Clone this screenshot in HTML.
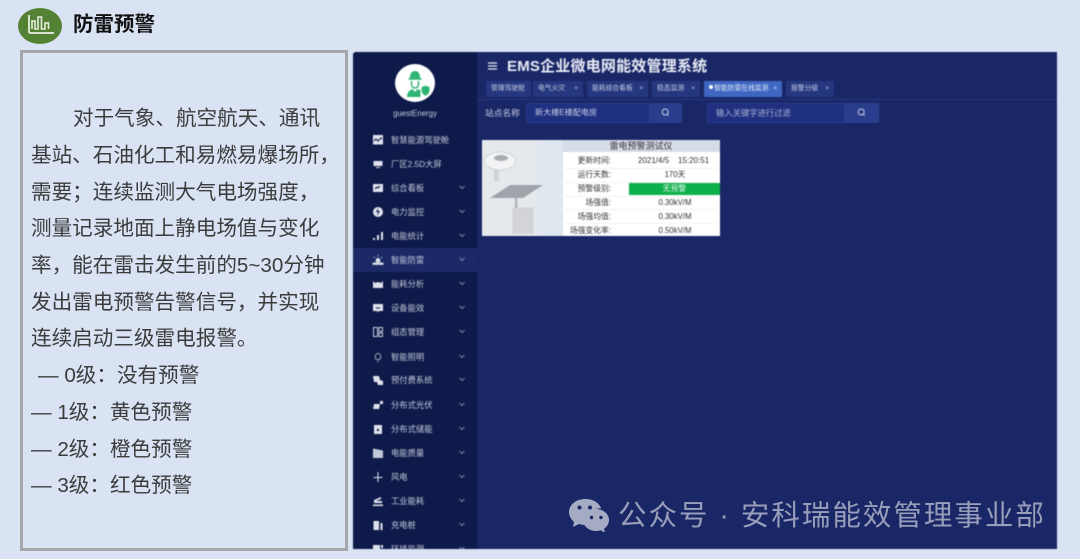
<!DOCTYPE html>
<html lang="zh-CN"><head><meta charset="utf-8"><style>
*{box-sizing:border-box;margin:0;padding:0}
html,body{width:1080px;height:559px;overflow:hidden;background:#d9e3f4;font-family:"Liberation Sans","Noto Sans CJK SC",sans-serif}
.a{position:absolute;white-space:nowrap}
#left div{position:absolute;left:31px;font-size:20.6px;line-height:37px;color:#3c3c3c;white-space:nowrap}
#app{position:absolute;left:353px;top:52px;width:704px;height:497px;background:#1a2766;overflow:hidden;border-radius:3px 0 0 0;filter:blur(.5px)}
#side{position:absolute;left:0;top:0;width:124px;height:497px;background:#0e1a4a}
.m{position:absolute;left:0;width:124px;height:24px;font-size:8.3px;line-height:24px;color:#c4c9da;padding-left:38px}
.m svg.i{position:absolute;left:19px;top:6px}
.m svg.c{position:absolute;left:105px;top:7px}
.t{position:absolute;top:29px;height:16px;background:#25387f;color:#c4cbe2;font-size:6.8px;line-height:16px;padding-left:5px;white-space:nowrap;border-radius:1px}
.t b{position:absolute;right:5px;top:0;font-weight:400;font-size:6.5px}
.row{position:absolute;left:0;width:129px;font-size:7.8px;line-height:11px;color:#333;text-align:right;white-space:nowrap}
.val{position:absolute;left:147px;width:92px;text-align:center;font-size:7.8px;line-height:11px;color:#333;white-space:nowrap}
.ln{position:absolute;left:84px;width:150px;border-top:1px dotted #e3e5e9}
</style></head><body>
<svg class="a" style="left:18px;top:8px" width="44" height="36" viewBox="0 0 44 36"><ellipse cx="22" cy="18" rx="22" ry="18" fill="#548235"/><path d="M11 7V23.500Q11 25 12.500 25H36" fill="none" stroke="#e8eedf" stroke-width="1.800"/><path d="M14 21V13h3v8h3V9h3.500v12h3.500V15h3.500v6" fill="none" stroke="#e8eedf" stroke-width="1.600"/></svg>
<div class="a" style="left:73px;top:10px;font-size:20.500px;line-height:30px;font-weight:700;color:#111">防雷预警</div>
<div class="a" style="left:20px;top:50px;width:328px;height:501px;border:3px solid #a6a6a6"></div>
<div id="left">
<div style="top:100px;left:73px">对于气象、航空航天、通讯</div>
<div style="top:137px">基站、石油化工和易燃易爆场所，</div>
<div style="top:174px">需要；连续监测大气电场强度，</div>
<div style="top:210px">测量记录地面上静电场值与变化</div>
<div style="top:247px">率，能在雷击发生前的5~30分钟</div>
<div style="top:284px">发出雷电预警告警信号，并实现</div>
<div style="top:320px">连续启动三级雷电报警。</div>
<div style="top:357px;left:38px">— 0级：没有预警</div>
<div style="top:394px">— 1级：黄色预警</div>
<div style="top:431px">— 2级：橙色预警</div>
<div style="top:467px">— 3级：红色预警</div>
</div>
<div id="app">
<div id="side">
<svg class="a" style="left:41px;top:11px" width="41" height="39" viewBox="0 0 41 39"><ellipse cx="21" cy="20" rx="20" ry="19" fill="#fff"/><path d="M16 15c0-5 2-7 5-7s5 2 5 7h1.500v1.800h-13V15z" fill="#2fb573"/><path d="M17.500 18v3c0 2.500 1.500 4 3.500 4s3.500-1.500 3.500-4v-3" fill="none" stroke="#2fb573" stroke-width="1.500"/><path d="M13 34c0-5 3-7 5.500-8l2.500 3 2.500-3 3 1.200V34z" fill="#2fb573"/><path d="M31.500 22l4.500 1.800v3.500c0 3-2 5-4.500 6-2.500-1-4.500-3-4.500-6v-3.500z" fill="#2fb573" stroke="#fff"/></svg>
<div class="a" style="left:0;width:124px;top:56px;text-align:center;font-size:7.800px;line-height:12px;color:#c4c9da">guestEnergy</div>
<div class="m" style="top:76px"><svg class="i" width="12" height="12" viewBox="0 0 12 12"><path d="M1 1h10v9.500H1z" fill="#dfe2ec"/><path d="M2 7l2-2 2 2 3-3 1 1" stroke="#0e1a4a" fill="none"/></svg>智慧能源驾驶舱</div>
<div class="m" style="top:100px"><svg class="i" width="12" height="12" viewBox="0 0 12 12"><path d="M1.500 3h9v5h-9zM4 9h4v1H4z" fill="#dfe2ec"/></svg>厂区2.5D大屏</div>
<div class="m" style="top:124px"><svg class="i" width="12" height="12" viewBox="0 0 12 12"><path d="M1 2h10v8H1z" fill="#dfe2ec"/><path d="M3 7l2-2 1 1 2-2" stroke="#0e1a4a" fill="none"/></svg>综合看板<svg class="c" width="8" height="8" viewBox="0 0 8 8"><path d="M1.500 3L4 5.500 6.500 3" stroke="#7a84a8" fill="none"/></svg></div>
<div class="m" style="top:148px"><svg class="i" width="12" height="12" viewBox="0 0 12 12"><circle cx="6" cy="6" r="5" fill="#dfe2ec"/><path d="M6 2L4 6h2l-1 4 3-5H6z" fill="#0e1a4a"/></svg>电力监控<svg class="c" width="8" height="8" viewBox="0 0 8 8"><path d="M1.500 3L4 5.500 6.500 3" stroke="#7a84a8" fill="none"/></svg></div>
<div class="m" style="top:172px"><svg class="i" width="12" height="12" viewBox="0 0 12 12"><path d="M1 8h2v2H1zM5 5h2v5H5zM9 2h2v8H9z" fill="#dfe2ec"/></svg>电能统计<svg class="c" width="8" height="8" viewBox="0 0 8 8"><path d="M1.500 3L4 5.500 6.500 3" stroke="#7a84a8" fill="none"/></svg></div>
<div class="m" style="top:196px;background:#1b2a66"><svg class="i" width="12" height="12" viewBox="0 0 12 12"><path d="M4 8c0-5 4-5 4 0zM1 9h10v1.500H1zM6 1v1.500M2 3l1 1M10 3L9 4" stroke="#dfe2ec" stroke-width=".8" fill="#dfe2ec"/></svg>智能防雷<svg class="c" width="8" height="8" viewBox="0 0 8 8"><path d="M1.500 3L4 5.500 6.500 3" stroke="#7a84a8" fill="none"/></svg></div>
<div class="m" style="top:220px"><svg class="i" width="12" height="12" viewBox="0 0 12 12"><path d="M1 3l2 2 3-1 3 1 2-2v7H1z" fill="#dfe2ec"/></svg>能耗分析<svg class="c" width="8" height="8" viewBox="0 0 8 8"><path d="M1.500 3L4 5.500 6.500 3" stroke="#7a84a8" fill="none"/></svg></div>
<div class="m" style="top:244px"><svg class="i" width="12" height="12" viewBox="0 0 12 12"><path d="M1 2h10v7H7l-1 1.500L5 9H1z" fill="#dfe2ec"/><path d="M4 6h4" stroke="#0e1a4a"/></svg>设备能效<svg class="c" width="8" height="8" viewBox="0 0 8 8"><path d="M1.500 3L4 5.500 6.500 3" stroke="#7a84a8" fill="none"/></svg></div>
<div class="m" style="top:268px"><svg class="i" width="12" height="12" viewBox="0 0 12 12"><path d="M1.500 1.500h4v9h-4zM7 1.500h3.500v4H7zM7 7h3.500v3.500H7z" stroke="#c4c9da" fill="none"/></svg>组态管理<svg class="c" width="8" height="8" viewBox="0 0 8 8"><path d="M1.500 3L4 5.500 6.500 3" stroke="#7a84a8" fill="none"/></svg></div>
<div class="m" style="top:293px"><svg class="i" width="12" height="12" viewBox="0 0 12 12"><path d="M4.500 8.500C2 6 3.500 2.500 6 2.500S10 6 7.500 8.500zM5 10.500h2" stroke="#c4c9da" stroke-width=".8" fill="none"/></svg>智能照明<svg class="c" width="8" height="8" viewBox="0 0 8 8"><path d="M1.500 3L4 5.500 6.500 3" stroke="#7a84a8" fill="none"/></svg></div>
<div class="m" style="top:316px"><svg class="i" width="12" height="12" viewBox="0 0 12 12"><path d="M1 2h6l1 4 3 1v4H6L5 8H2z" fill="#dfe2ec"/></svg>预付费系统<svg class="c" width="8" height="8" viewBox="0 0 8 8"><path d="M1.500 3L4 5.500 6.500 3" stroke="#7a84a8" fill="none"/></svg></div>
<div class="m" style="top:341px"><svg class="i" width="12" height="12" viewBox="0 0 12 12"><path d="M2 5h6l-1 5H1zM8 2h3v3H8z" fill="#dfe2ec"/></svg>分布式光伏<svg class="c" width="8" height="8" viewBox="0 0 8 8"><path d="M1.500 3L4 5.500 6.500 3" stroke="#7a84a8" fill="none"/></svg></div>
<div class="m" style="top:365px"><svg class="i" width="12" height="12" viewBox="0 0 12 12"><path d="M2 2h8v9H2z" fill="#dfe2ec"/><path d="M5 6h2v2H5z" fill="#0e1a4a"/></svg>分布式储能<svg class="c" width="8" height="8" viewBox="0 0 8 8"><path d="M1.500 3L4 5.500 6.500 3" stroke="#7a84a8" fill="none"/></svg></div>
<div class="m" style="top:389px"><svg class="i" width="12" height="12" viewBox="0 0 12 12"><path d="M1 1.500l10 2V11H1z" fill="#c4c9da"/></svg>电能质量<svg class="c" width="8" height="8" viewBox="0 0 8 8"><path d="M1.500 3L4 5.500 6.500 3" stroke="#7a84a8" fill="none"/></svg></div>
<div class="m" style="top:413px"><svg class="i" width="12" height="12" viewBox="0 0 12 12"><path d="M6 1v10M1.500 6.500h9" stroke="#dfe2ec"/></svg>风电<svg class="c" width="8" height="8" viewBox="0 0 8 8"><path d="M1.500 3L4 5.500 6.500 3" stroke="#7a84a8" fill="none"/></svg></div>
<div class="m" style="top:437px"><svg class="i" width="12" height="12" viewBox="0 0 12 12"><path d="M2 5l7-3v2L4 6h6v2H2zM1 9.500h10V11H1z" fill="#dfe2ec"/></svg>工业能耗<svg class="c" width="8" height="8" viewBox="0 0 8 8"><path d="M1.500 3L4 5.500 6.500 3" stroke="#7a84a8" fill="none"/></svg></div>
<div class="m" style="top:461px"><svg class="i" width="12" height="12" viewBox="0 0 12 12"><path d="M1.500 2H7v9H1.500zM8.500 4h2v7h-2z" fill="#dfe2ec"/></svg>充电桩<svg class="c" width="8" height="8" viewBox="0 0 8 8"><path d="M1.500 3L4 5.500 6.500 3" stroke="#7a84a8" fill="none"/></svg></div>
<div class="m" style="top:485px"><svg class="i" width="12" height="12" viewBox="0 0 12 12"><path d="M1 2h7v10H1zM9 2h2v3H9z" fill="#dfe2ec"/></svg>环境监测<svg class="c" width="8" height="8" viewBox="0 0 8 8"><path d="M1.500 3L4 5.500 6.500 3" stroke="#7a84a8" fill="none"/></svg></div>
</div>
<svg class="a" style="left:134px;top:9px" width="11" height="10" viewBox="0 0 11 10"><path d="M1 2h9M1 5h9M1 8h9" stroke="#e8ebf5" stroke-width="1.300"/></svg>
<div class="a" style="left:154px;top:5px;font-size:15px;line-height:20px;font-weight:700;color:#e8ebf5;letter-spacing:.2px">EMS企业微电网能效管理系统</div>
<div class="a" style="left:124px;top:47px;width:580px;height:1px;background:#25387f"></div>
<div class="t" style="left:133px;width:45px">管理驾驶舱</div>
<div class="t" style="left:180px;width:50px">电气火灾<b>×</b></div>
<div class="t" style="left:234px;width:61px">能耗综合看板<b>×</b></div>
<div class="t" style="left:299px;width:48px">稳态监测<b>×</b></div>
<div class="t" style="left:351px;width:78px;background:#3f67c2;color:#e6ebf8"><span style="display:inline-block;width:4px;height:4px;border-radius:50%;background:#fff;margin-right:1px;vertical-align:1px"></span>智能防雷在线监测<b>×</b></div>
<div class="t" style="left:433px;width:48px">报警分级<b>×</b></div>
<div class="a" style="left:132px;top:55px;font-size:8.700px;line-height:12px;color:#c4cbe2">站点名称</div>
<div class="a" style="left:173px;top:51px;width:156px;height:20px;background:#1f3080;border:1px solid #2a3d8c;border-radius:2px;font-size:8.100px;line-height:18px;color:#c9cfe6;padding-left:8px">新大楼E楼配电房</div>
<div class="a" style="left:296px;top:51px;width:33px;height:20px;background:#2a3d8c;border-radius:0 2px 2px 0"></div>
<svg class="a" style="left:308px;top:56px" width="9" height="9" viewBox="0 0 9 9"><circle cx="4.200" cy="4" r="3" stroke="#c9cfe6" fill="none"/><path d="M6.500 6.500l1.200 1" stroke="#c9cfe6"/></svg>
<div class="a" style="left:354px;top:51px;width:172px;height:20px;background:#1f3080;border:1px solid #2a3d8c;border-radius:2px;font-size:8.300px;line-height:18px;color:#a9b2d2;padding-left:8px">输入关键字进行过滤</div>
<div class="a" style="left:491px;top:51px;width:35px;height:20px;background:#2a3d8c;border-radius:0 2px 2px 0"></div>
<svg class="a" style="left:504px;top:56px" width="9" height="9" viewBox="0 0 9 9"><circle cx="4.200" cy="4" r="3" stroke="#c9cfe6" fill="none"/><path d="M6.500 6.500l1.200 1" stroke="#c9cfe6"/></svg>
<div class="a" style="left:129px;top:88px;width:238px;height:96px;background:#fff;overflow:hidden;filter:blur(.2px)">
<svg style="position:absolute;left:0;top:0" width="81" height="96" viewBox="0 0 81 96"><rect width="81" height="96" fill="#e6e9ec"/><rect x="55" width="26" height="96" fill="#e0e6ed"/><rect x="12" y="29" width="5" height="12" fill="#d0d3d6"/><ellipse cx="18" cy="21" rx="15.500" ry="9" fill="#f2f3f4" stroke="#c8cbd0" stroke-width=".7"/><ellipse cx="19" cy="18" rx="7" ry="3" fill="#a9adb2"/><path d="M28 45h33L41 58H8z" fill="#9fa4aa"/><rect x="33" y="58" width="2.500" height="34" fill="#b3b6ba"/><rect x="31" y="68" width="20" height="25" fill="#d2d4d7" stroke="#bfc2c6" stroke-width=".5"/></svg>
<div class="a" style="left:80px;top:0;width:158px;height:12px;background:#d6dce8;text-align:center;font-size:9px;line-height:12px;color:#333">雷电预警测试仪</div>
<div class="row" style="top:15px">更新时间:</div>
<div class="a" style="left:156px;top:15px;font-size:8px;line-height:11px;color:#333">2021/4/5&nbsp;&nbsp;&nbsp;&nbsp;15:20:51</div>
<div class="ln" style="top:28px"></div>
<div class="row" style="top:29px">运行天数:</div>
<div class="val" style="top:29px">170天</div>
<div class="ln" style="top:42px"></div>
<div class="row" style="top:43px">预警级别:</div>
<div class="a" style="left:147px;top:43px;width:91px;height:12px;background:#0db14b;text-align:center;font-size:7.800px;line-height:12px;color:#e9f8ee">无预警</div>
<div class="ln" style="top:56px"></div>
<div class="row" style="top:57px">场强值:</div>
<div class="val" style="top:57px">0.30kV/M</div>
<div class="ln" style="top:69px"></div>
<div class="row" style="top:71px">场强均值:</div>
<div class="val" style="top:71px">0.30kV/M</div>
<div class="ln" style="top:83px"></div>
<div class="row" style="top:85px">场强变化率:</div>
<div class="val" style="top:85px">0.50kV/M</div>
</div>
</div>
<svg class="a" style="left:569px;top:498px" width="42" height="34" viewBox="0 0 42 34"><path d="M16 1C7 1 0 7 0 14c0 4 2 7 5 10l-1 5 6-3c2 .5 4 1 6 1 1 0 1 0 2-.100-.5-1.500-.8-3-.8-4.500 0-7 6.500-12 14-12h1C30 4.500 24 1 16 1z" fill="#a6abc4"/><path d="M27 11c-7 0-13 5-13 11s6 11 13 11c1.500 0 3-.2 4.500-.8l4.500 2.500-1-4c3-2 5-5 5-8.700 0-6-6-11-13-11z" fill="#a6abc4"/><circle cx="10.500" cy="9.500" r="2" fill="#1a2766"/><circle cx="21" cy="9.500" r="2" fill="#1a2766"/><circle cx="22.500" cy="19.500" r="1.700" fill="#1a2766"/><circle cx="32" cy="19.500" r="1.700" fill="#1a2766"/></svg>
<div class="a" style="left:618px;top:497px;font-size:28.500px;line-height:38px;color:#989eba;letter-spacing:2px">公众号 · 安科瑞能效管理事业部</div>
</body></html>
